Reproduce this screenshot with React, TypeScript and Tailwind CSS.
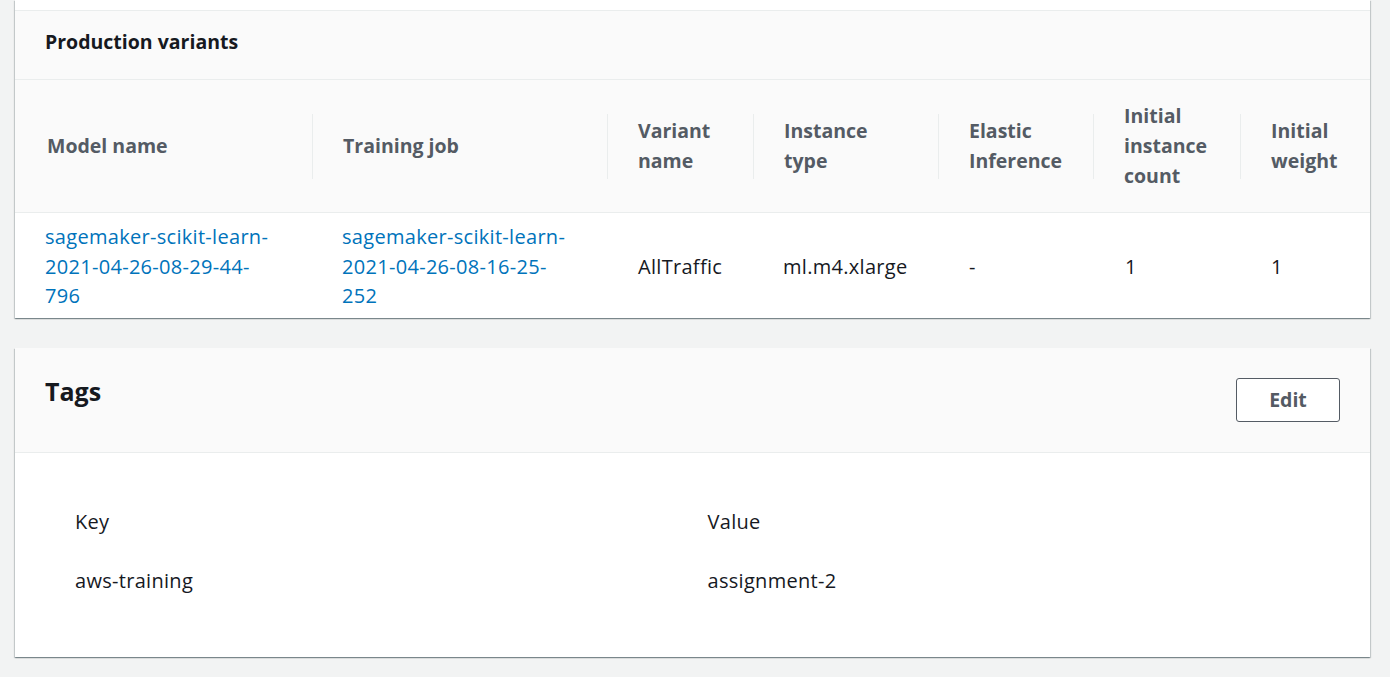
import React from "react";

const cols = [
  { w: "w-[297px]", label: ["Model name"] },
  { w: "w-[295px]", label: ["Training job"] },
  { w: "w-[146px]", label: ["Variant", "name"] },
  { w: "w-[185px]", label: ["Instance", "type"] },
  { w: "w-[155px]", label: ["Elastic", "Inference"] },
  { w: "w-[147px]", label: ["Initial", "instance", "count"] },
  { w: "flex-1", label: ["Initial", "weight"] },
];

const shadow =
  "shadow-[0_1px_1px_0_rgba(0,28,36,0.3),1px_1px_1px_0_rgba(0,28,36,0.15),-1px_1px_1px_0_rgba(0,28,36,0.15)]";

export default function App() {
  return (
    <div
      className="min-h-screen bg-[#f2f3f3] pl-[15px] pr-[20px] text-[20px] text-[#16191f]"
      style={{ fontFamily: '"Open Sans", "Noto Sans", sans-serif' }}
    >
      {/* Card 1 */}
      <div className={`bg-white ${shadow}`}>
        <div className="h-[10px] bg-white" />
        <div className="flex h-[69px] items-center border-t border-[#eaeded] bg-[#fafafa] pb-[7px] pl-[30px] text-[19.5px] font-bold">
          Production variants
        </div>
        <div className="flex h-[133px] items-center border-t border-[#eaeded] bg-[#fafafa]">
          {cols.map((c, i) => (
            <div key={i} className={`${c.w} flex h-[65px] items-center ${i > 0 ? "border-l border-[#eaeded]" : ""}`}>
              <div className={`${i > 0 ? "pl-[30px]" : "pl-[32px]"} whitespace-nowrap text-[19.5px] font-bold leading-[30px] text-[#545b64]`}>
                {c.label.map((l, j) => (
                  <div key={j}>{l}</div>
                ))}
              </div>
            </div>
          ))}
        </div>
        <div className="flex h-[106px] items-center whitespace-nowrap border-t border-[#eaeded] pt-[2px] leading-[29.5px] tracking-[0.3px]">
          <div className="w-[297px] pl-[30px] text-[#0073bb]">
            <div>sagemaker-scikit-learn-</div>
            <div>2021-04-26-08-29-44-</div>
            <div>796</div>
          </div>
          <div className="w-[295px] pl-[30px] text-[#0073bb]">
            <div>sagemaker-scikit-learn-</div>
            <div>2021-04-26-08-16-25-</div>
            <div>252</div>
          </div>
          <div className="w-[146px] pl-[31px]">AllTraffic</div>
          <div className="w-[185px] pl-[30px]">ml.m4.xlarge</div>
          <div className="w-[155px] pl-[31px]">-</div>
          <div className="w-[147px] pl-[32px]">1</div>
          <div className="flex-1 pl-[31px]">1</div>
        </div>
      </div>

      {/* Card 2 */}
      <div className={`mt-[30px] bg-white ${shadow}`}>
        <div className="flex h-[105px] items-start justify-between border-b border-[#eaeded] bg-[#fafafa] pl-[30px] pr-[30px]">
          <div className="mt-[28px] text-[25px] font-bold leading-[30px]">Tags</div>
          <button className="mt-[30px] flex h-[44px] w-[104px] items-center justify-center rounded-[3px] border border-[#545b64] bg-white text-[19.5px] font-bold text-[#545b64]">
            Edit
          </button>
        </div>
        <div className="grid h-[204px] grid-cols-2 content-start pl-[60px] pr-[30px] pt-[54px] tracking-[0.3px]">
          <div className="leading-[30px]">Key</div>
          <div className="leading-[30px]">Value</div>
          <div className="mt-[29px] leading-[30px]">aws-training</div>
          <div className="mt-[29px] leading-[30px]">assignment-2</div>
        </div>
      </div>
    </div>
  );
}
